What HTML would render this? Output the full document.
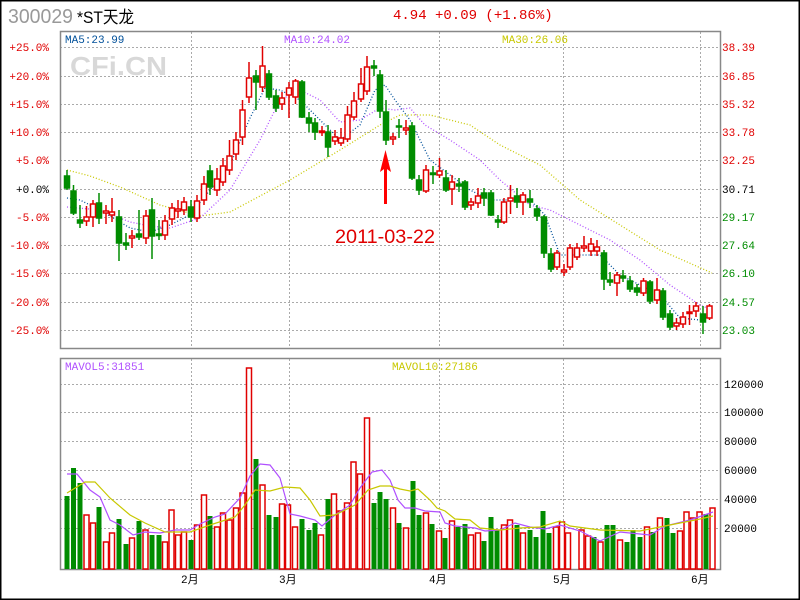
<!DOCTYPE html>
<html><head><meta charset="utf-8"><style>
html,body{margin:0;padding:0;background:#fff;}
svg{display:block;}
text{font-family:"Liberation Mono","Noto Sans CJK SC",monospace;}
</style></head><body>
<svg width="800" height="600" viewBox="0 0 800 600" xmlns="http://www.w3.org/2000/svg">
<rect x="0.5" y="0.5" width="799" height="599" fill="#fff" stroke="#000" stroke-width="2"/>
<text x="8" y="23" font-size="20" fill="#999" style="font-family:'Liberation Sans',sans-serif" textLength="65" lengthAdjust="spacingAndGlyphs">300029</text>
<text x="77" y="23" font-size="17" fill="#000" style="font-family:'Liberation Sans','Noto Sans CJK SC',sans-serif" textLength="57" lengthAdjust="spacingAndGlyphs">*ST天龙</text>
<text x="393" y="19" font-size="14" fill="#e00000">4.94 +0.09 (+1.86%)</text>

<!-- grids -->
<g stroke="#aaa" stroke-dasharray="2 2" stroke-width="1">
<line x1="60" x2="720" y1="47.5" y2="47.5"/><line x1="60" x2="720" y1="76.5" y2="76.5"/><line x1="60" x2="720" y1="104.5" y2="104.5"/><line x1="60" x2="720" y1="132.5" y2="132.5"/><line x1="60" x2="720" y1="160.5" y2="160.5"/><line x1="60" x2="720" y1="189.5" y2="189.5"/><line x1="60" x2="720" y1="217.5" y2="217.5"/><line x1="60" x2="720" y1="245.5" y2="245.5"/><line x1="60" x2="720" y1="273.5" y2="273.5"/><line x1="60" x2="720" y1="302.5" y2="302.5"/><line x1="60" x2="720" y1="330.5" y2="330.5"/>
<line y1="32" y2="348" x1="191.5" x2="191.5"/><line y1="32" y2="348" x1="289.5" x2="289.5"/><line y1="32" y2="348" x1="439.5" x2="439.5"/><line y1="32" y2="348" x1="563.5" x2="563.5"/><line y1="32" y2="348" x1="700.5" x2="700.5"/>
<line x1="60" x2="720" y1="384.5" y2="384.5"/><line x1="60" x2="720" y1="412.5" y2="412.5"/><line x1="60" x2="720" y1="441.5" y2="441.5"/><line x1="60" x2="720" y1="470.5" y2="470.5"/><line x1="60" x2="720" y1="499.5" y2="499.5"/><line x1="60" x2="720" y1="528.5" y2="528.5"/>
<line y1="359" y2="569" x1="191.5" x2="191.5"/><line y1="359" y2="569" x1="289.5" x2="289.5"/><line y1="359" y2="569" x1="439.5" x2="439.5"/><line y1="359" y2="569" x1="563.5" x2="563.5"/><line y1="359" y2="569" x1="700.5" x2="700.5"/>
</g>
<rect x="60.5" y="31.5" width="660" height="317" fill="none" stroke="#888" stroke-width="1.5"/>
<rect x="60.5" y="358.5" width="660" height="211" fill="none" stroke="#888" stroke-width="1.5"/>

<text x="70" y="75" font-size="26" font-weight="bold" fill="#d8d8d8" style="font-family:'Liberation Sans',sans-serif" textLength="97" lengthAdjust="spacingAndGlyphs">CFi.CN</text>

<g font-size="11">
<text x="65" y="43" fill="#00509a">MA5:23.99</text>
<text x="284" y="43" fill="#b050ff">MA10:24.02</text>
<text x="502" y="43" fill="#c8c800">MA30:26.06</text>
<text x="65" y="370" fill="#b050ff">MAVOL5:31851</text>
<text x="392" y="370" fill="#c8c800">MAVOL10:27186</text>
</g>
<g font-size="11" text-anchor="end">
<text x="49" y="51" fill="#e00000">+25.0%</text><text x="49" y="80" fill="#e00000">+20.0%</text><text x="49" y="108" fill="#e00000">+15.0%</text><text x="49" y="136" fill="#e00000">+10.0%</text><text x="49" y="164" fill="#e00000">+5.0%</text><text x="49" y="193" fill="#000">+0.0%</text><text x="49" y="221" fill="#e00000">-5.0%</text><text x="49" y="249" fill="#e00000">-10.0%</text><text x="49" y="277" fill="#e00000">-15.0%</text><text x="49" y="306" fill="#e00000">-20.0%</text><text x="49" y="334" fill="#e00000">-25.0%</text>
</g>
<g font-size="11">
<text x="722" y="51" fill="#e00000">38.39</text><text x="722" y="80" fill="#e00000">36.85</text><text x="722" y="108" fill="#e00000">35.32</text><text x="722" y="136" fill="#e00000">33.78</text><text x="722" y="164" fill="#e00000">32.25</text><text x="722" y="193" fill="#000">30.71</text><text x="722" y="221" fill="#008c00">29.17</text><text x="722" y="249" fill="#008c00">27.64</text><text x="722" y="277" fill="#008c00">26.10</text><text x="722" y="306" fill="#008c00">24.57</text><text x="722" y="334" fill="#008c00">23.03</text>
<text x="724" y="388" fill="#000">120000</text><text x="724" y="416" fill="#000">100000</text><text x="724" y="445" fill="#000">80000</text><text x="724" y="474" fill="#000">60000</text><text x="724" y="503" fill="#000">40000</text><text x="724" y="532" fill="#000">20000</text>
<text x="181" y="583" fill="#000">2月</text><text x="279" y="583" fill="#000">3月</text><text x="429" y="583" fill="#000">4月</text><text x="553" y="583" fill="#000">5月</text><text x="691" y="583" fill="#000">6月</text>
</g>

<!-- MA lines -->
<g fill="none" stroke-dasharray="1 2" stroke-width="1.3">
<polyline stroke="#c8c800" points="67,170 90,176 120,187 160,205 200,216 230,212 260,196 290,180 340,150 380,125 400,115 430,115 470,125 500,145 540,165 580,200 620,225 660,250 712,273"/>
<polyline stroke="#b050ff" points="67,207 100,210 130,222 150,226 170,228 200,218 230,190 260,140 280,100 300,90 320,100 340,122 360,120 380,108 395,110 410,108 425,125 450,140 480,160 500,180 530,205 550,210 580,225 610,240 640,260 670,285 700,305 712,310"/>
<polyline stroke="#00509a" points="67,198 80,200 100,210 130,228 150,232 170,225 190,215 210,190 230,165 250,118 265,88 280,90 300,100 320,120 340,140 360,125 375,90 385,85 395,100 410,120 430,160 450,175 470,190 490,200 510,200 530,200 545,215 560,255 580,255 600,255 620,275 640,285 660,295 680,318 700,320 712,315"/>
</g>

<!-- candles -->
<g stroke-width="1.5">
<g stroke="#008c00" fill="#008c00">
<line x1="67" x2="67" y1="170" y2="190"/><rect x="64.5" y="176" width="5" height="12"/>
<line x1="73.5" x2="73.5" y1="185" y2="215"/><rect x="71" y="191" width="5" height="22"/>
<line x1="80" x2="80" y1="205" y2="228"/><rect x="77.5" y="220" width="5" height="3"/>
<line x1="99" x2="99" y1="193" y2="224"/><rect x="96.5" y="203" width="5" height="15"/>
<line x1="119" x2="119" y1="210" y2="261"/><rect x="116.5" y="217" width="5" height="26"/>
<line x1="126" x2="126" y1="233" y2="250"/><rect x="123.5" y="243" width="5" height="2"/>
<line x1="139" x2="139" y1="210" y2="240"/><rect x="136.5" y="234" width="5" height="3"/>
<line x1="152" x2="152" y1="198" y2="259"/><rect x="149.5" y="210" width="5" height="26"/>
<line x1="159" x2="159" y1="220" y2="240"/><rect x="156.5" y="234" width="5" height="1.5"/>
<line x1="191" x2="191" y1="200" y2="222"/><rect x="188.5" y="207" width="5" height="10"/>
<line x1="210" x2="210" y1="165" y2="195"/><rect x="207.5" y="171" width="5" height="16"/>
<line x1="256" x2="256" y1="70" y2="110"/><rect x="253.5" y="76" width="5" height="6"/>
<line x1="269" x2="269" y1="70" y2="100"/><rect x="266.5" y="74" width="5" height="23"/>
<line x1="276" x2="276" y1="90" y2="112"/><rect x="273.5" y="96" width="5" height="12"/>
<line x1="302" x2="302" y1="80" y2="118"/><rect x="299.5" y="82" width="5" height="35"/>
<line x1="309" x2="309" y1="112" y2="132"/><rect x="306.5" y="118" width="5" height="5"/>
<line x1="315" x2="315" y1="118" y2="140"/><rect x="312.5" y="123" width="5" height="9"/>
<line x1="328" x2="328" y1="125" y2="157"/><rect x="325.5" y="132" width="5" height="15"/>
<line x1="374" x2="374" y1="60" y2="76"/><rect x="371.5" y="66" width="5" height="2"/>
<line x1="380" x2="380" y1="70" y2="118"/><rect x="377.5" y="75" width="5" height="36"/>
<line x1="386" x2="386" y1="100" y2="145"/><rect x="383.5" y="112" width="5" height="28"/>
<line x1="399" x2="399" y1="119" y2="138"/><rect x="396.5" y="126" width="5" height="1"/>
<line x1="412" x2="412" y1="122" y2="180"/><rect x="409.5" y="126" width="5" height="52"/>
<line x1="419" x2="419" y1="175" y2="195"/><rect x="416.5" y="180" width="5" height="10"/>
<line x1="433" x2="433" y1="166" y2="184"/><rect x="430.5" y="173" width="5" height="1.5"/>
<line x1="446" x2="446" y1="170" y2="192"/><rect x="443.5" y="178" width="5" height="12"/>
<line x1="459" x2="459" y1="178" y2="192"/><rect x="456.5" y="184" width="5" height="2"/>
<line x1="465" x2="465" y1="180" y2="210"/><rect x="462.5" y="182" width="5" height="25"/>
<line x1="484" x2="484" y1="188" y2="206"/><rect x="481.5" y="193" width="5" height="5"/>
<line x1="491" x2="491" y1="190" y2="216"/><rect x="488.5" y="193" width="5" height="22"/>
<line x1="498" x2="498" y1="215" y2="228"/><rect x="495.5" y="220" width="5" height="2"/>
<line x1="517" x2="517" y1="188" y2="208"/><rect x="514.5" y="196" width="5" height="6"/>
<line x1="530" x2="530" y1="190" y2="208"/><rect x="527.5" y="199" width="5" height="3"/>
<line x1="537" x2="537" y1="205" y2="221"/><rect x="534.5" y="209" width="5" height="7"/>
<line x1="544" x2="544" y1="215" y2="258"/><rect x="541.5" y="217" width="5" height="36"/>
<line x1="551" x2="551" y1="248" y2="272"/><rect x="548.5" y="254" width="5" height="15"/>
<line x1="604" x2="604" y1="250" y2="290"/><rect x="601.5" y="253" width="5" height="26"/>
<line x1="610" x2="610" y1="272" y2="286"/><rect x="607.5" y="280" width="5" height="2"/>
<line x1="623" x2="623" y1="270" y2="282"/><rect x="620.5" y="276" width="5" height="2"/>
<line x1="630" x2="630" y1="276" y2="292"/><rect x="627.5" y="281" width="5" height="8"/>
<line x1="637" x2="637" y1="284" y2="296"/><rect x="634.5" y="288" width="5" height="4"/>
<line x1="650" x2="650" y1="280" y2="304"/><rect x="647.5" y="282" width="5" height="19"/>
<line x1="663" x2="663" y1="288" y2="320"/><rect x="660.5" y="291" width="5" height="26"/>
<line x1="670" x2="670" y1="310" y2="330"/><rect x="667.5" y="314" width="5" height="13"/>
<line x1="703" x2="703" y1="306" y2="334"/><rect x="700.5" y="314" width="5" height="8"/>
</g>
<g stroke="#e00000" fill="#fff">
<line x1="86.5" x2="86.5" y1="206" y2="226"/><rect x="84" y="217" width="5" height="4"/>
<line x1="93" x2="93" y1="200" y2="227"/><rect x="90.5" y="204" width="5" height="13"/>
<line x1="106" x2="106" y1="205" y2="224"/><rect x="103.5" y="211" width="5" height="2"/>
<line x1="112" x2="112" y1="198" y2="222"/><rect x="109.5" y="212" width="5" height="3"/>
<line x1="132" x2="132" y1="230" y2="248"/><rect x="129.5" y="236" width="5" height="2"/>
<line x1="146" x2="146" y1="210" y2="244"/><rect x="143.5" y="216" width="5" height="22"/>
<line x1="165" x2="165" y1="215" y2="240"/><rect x="162.5" y="221" width="5" height="14"/>
<line x1="172" x2="172" y1="203" y2="225"/><rect x="169.5" y="208" width="5" height="11"/>
<line x1="178" x2="178" y1="200" y2="218"/><rect x="175.5" y="209" width="5" height="2"/>
<line x1="184" x2="184" y1="197" y2="215"/><rect x="181.5" y="202" width="5" height="8"/>
<line x1="197" x2="197" y1="195" y2="222"/><rect x="194.5" y="201" width="5" height="17"/>
<line x1="204" x2="204" y1="176" y2="205"/><rect x="201.5" y="184" width="5" height="16"/>
<line x1="217" x2="217" y1="168" y2="196"/><rect x="214.5" y="179" width="5" height="11"/>
<line x1="223" x2="223" y1="158" y2="186"/><rect x="220.5" y="166" width="5" height="16"/>
<line x1="229.5" x2="229.5" y1="140" y2="175"/><rect x="227" y="156" width="5" height="14"/>
<line x1="236" x2="236" y1="132" y2="160"/><rect x="233.5" y="140" width="5" height="14"/>
<line x1="242.5" x2="242.5" y1="100" y2="145"/><rect x="240" y="110" width="5" height="27"/>
<line x1="249" x2="249" y1="62" y2="103"/><rect x="246.5" y="78" width="5" height="19"/>
<line x1="262.5" x2="262.5" y1="46" y2="92"/><rect x="260" y="66" width="5" height="21"/>
<line x1="282" x2="282" y1="92" y2="110"/><rect x="279.5" y="98" width="5" height="6"/>
<line x1="289" x2="289" y1="82" y2="118"/><rect x="286.5" y="88" width="5" height="7"/>
<line x1="295.5" x2="295.5" y1="79" y2="104"/><rect x="293" y="81" width="5" height="16"/>
<line x1="322" x2="322" y1="126" y2="136"/><rect x="319.5" y="131" width="5" height="1.5"/>
<line x1="335" x2="335" y1="130" y2="145"/><rect x="332.5" y="137" width="5" height="4"/>
<line x1="341" x2="341" y1="128" y2="146"/><rect x="338.5" y="138" width="5" height="5"/>
<line x1="347.5" x2="347.5" y1="106" y2="142"/><rect x="345" y="115" width="5" height="24"/>
<line x1="354" x2="354" y1="92" y2="120"/><rect x="351.5" y="101" width="5" height="16"/>
<line x1="361" x2="361" y1="68" y2="102"/><rect x="358.5" y="84" width="5" height="15"/>
<line x1="367" x2="367" y1="56" y2="95"/><rect x="364.5" y="67" width="5" height="24"/>
<line x1="393" x2="393" y1="133" y2="145"/><rect x="390.5" y="137" width="5" height="2"/>
<line x1="406" x2="406" y1="120" y2="135"/><rect x="403.5" y="128" width="5" height="2"/>
<line x1="426" x2="426" y1="165" y2="193"/><rect x="423.5" y="170" width="5" height="21"/>
<line x1="439.5" x2="439.5" y1="158" y2="178"/><rect x="437" y="171" width="5" height="4"/>
<line x1="452" x2="452" y1="175" y2="205"/><rect x="449.5" y="182" width="5" height="7"/>
<line x1="471" x2="471" y1="198" y2="210"/><rect x="468.5" y="202" width="5" height="3"/>
<line x1="478" x2="478" y1="188" y2="208"/><rect x="475.5" y="196" width="5" height="7"/>
<line x1="504" x2="504" y1="198" y2="224"/><rect x="501.5" y="202" width="5" height="20"/>
<line x1="510.5" x2="510.5" y1="185" y2="214"/><rect x="508" y="198" width="5" height="3"/>
<line x1="523" x2="523" y1="192" y2="215"/><rect x="520.5" y="195" width="5" height="7"/>
<line x1="557" x2="557" y1="250" y2="270"/><rect x="554.5" y="253" width="5" height="14"/>
<line x1="564" x2="564" y1="264" y2="276"/><rect x="561.5" y="270" width="5" height="2"/>
<line x1="570" x2="570" y1="244" y2="270"/><rect x="567.5" y="248" width="5" height="19"/>
<line x1="577" x2="577" y1="243" y2="260"/><rect x="574.5" y="248" width="5" height="9"/>
<line x1="584" x2="584" y1="236" y2="252"/><rect x="581.5" y="246" width="5" height="2"/>
<line x1="591" x2="591" y1="238" y2="256"/><rect x="588.5" y="244" width="5" height="7"/>
<line x1="597" x2="597" y1="240" y2="256"/><rect x="594.5" y="247" width="5" height="4"/>
<line x1="617" x2="617" y1="272" y2="296"/><rect x="614.5" y="275" width="5" height="8"/>
<line x1="643.5" x2="643.5" y1="278" y2="296"/><rect x="641" y="281" width="5" height="12"/>
<line x1="657" x2="657" y1="278" y2="304"/><rect x="654.5" y="290" width="5" height="10"/>
<line x1="676.5" x2="676.5" y1="318" y2="330"/><rect x="674" y="323" width="5" height="3"/>
<line x1="683" x2="683" y1="312" y2="328"/><rect x="680.5" y="317" width="5" height="7"/>
<line x1="689.5" x2="689.5" y1="305" y2="325"/><rect x="687" y="312" width="5" height="1.5"/>
<line x1="696" x2="696" y1="302" y2="317"/><rect x="693.5" y="306" width="5" height="5"/>
<line x1="709.5" x2="709.5" y1="304" y2="320"/><rect x="707" y="306" width="5" height="12"/>
</g>
</g>

<!-- arrow and date -->
<g fill="#ff0000">
<rect x="384" y="162" width="3" height="42"/>
<polygon points="385.5,150 380,172 385.5,168 391,172"/>
</g>
<text x="335" y="243" font-size="19" fill="#e00000" style="font-family:'Liberation Sans',sans-serif" textLength="100" lengthAdjust="spacingAndGlyphs">2011-03-22</text>

<!-- volume bars -->
<g stroke-width="1.5">
<g fill="#008c00">
<rect x="64.5" y="496" width="5" height="73"/><rect x="71" y="468" width="5" height="101"/><rect x="77.5" y="483" width="5" height="86"/>
<rect x="96.5" y="507" width="5" height="62"/><rect x="116.5" y="519" width="5" height="50"/><rect x="123.5" y="544" width="5" height="25"/>
<rect x="136.5" y="521" width="5" height="48"/><rect x="149.5" y="535" width="5" height="34"/><rect x="156.5" y="535" width="5" height="34"/>
<rect x="188.5" y="540" width="5" height="29"/><rect x="207.5" y="516" width="5" height="53"/><rect x="253.5" y="459" width="5" height="110"/>
<rect x="266.5" y="515" width="5" height="54"/><rect x="273.5" y="517" width="5" height="52"/><rect x="299.5" y="519" width="5" height="50"/>
<rect x="306.5" y="530" width="5" height="39"/><rect x="312.5" y="523" width="5" height="46"/><rect x="325.5" y="499" width="5" height="70"/>
<rect x="371.5" y="503" width="5" height="66"/><rect x="377.5" y="492" width="5" height="77"/><rect x="383.5" y="499" width="5" height="70"/>
<rect x="396.5" y="523" width="5" height="46"/><rect x="410.5" y="481" width="5" height="88"/><rect x="416.5" y="515" width="5" height="54"/>
<rect x="429.5" y="524" width="5" height="45"/><rect x="442.5" y="538" width="5" height="31"/><rect x="455.5" y="527" width="5" height="42"/>
<rect x="462.5" y="524" width="5" height="45"/><rect x="481.5" y="541" width="5" height="28"/><rect x="488.5" y="517" width="5" height="52"/>
<rect x="494.5" y="530" width="5" height="39"/><rect x="514.5" y="525" width="5" height="44"/><rect x="527.5" y="530" width="5" height="39"/>
<rect x="533.5" y="537" width="5" height="32"/><rect x="540.5" y="511" width="5" height="58"/><rect x="546.5" y="533" width="5" height="36"/>
<rect x="591.5" y="537" width="5" height="32"/><rect x="604.5" y="525" width="5" height="44"/><rect x="610.5" y="525" width="5" height="44"/>
<rect x="624.5" y="542" width="5" height="27"/><rect x="630.5" y="530" width="5" height="39"/><rect x="637.5" y="537" width="5" height="32"/>
<rect x="650.5" y="532" width="5" height="37"/><rect x="664.5" y="518" width="5" height="51"/><rect x="670.5" y="533" width="5" height="36"/>
<rect x="703.5" y="514" width="5" height="55"/>
</g>
<g fill="#fff" stroke="#e00000">
<rect x="84" y="515" width="5" height="54"/><rect x="90.5" y="523" width="5" height="46"/><rect x="103.5" y="542" width="5" height="27"/>
<rect x="109.5" y="533" width="5" height="36"/><rect x="129.5" y="538" width="5" height="31"/><rect x="143" y="530" width="5" height="39"/>
<rect x="162.5" y="542" width="5" height="27"/><rect x="169" y="510" width="5" height="59"/><rect x="175.5" y="535" width="5" height="34"/>
<rect x="181.5" y="532" width="5" height="37"/><rect x="194.5" y="525" width="5" height="44"/><rect x="201.5" y="495" width="5" height="74"/>
<rect x="214.5" y="527" width="5" height="42"/><rect x="220.5" y="513" width="5" height="56"/><rect x="227" y="520" width="5" height="49"/>
<rect x="233.5" y="508" width="5" height="61"/><rect x="240" y="493" width="5" height="76"/><rect x="246.5" y="368" width="5" height="201"/>
<rect x="260" y="485" width="5" height="84"/><rect x="279.5" y="504" width="5" height="65"/><rect x="285.5" y="505" width="5" height="64"/>
<rect x="292.5" y="527" width="5" height="42"/><rect x="318.5" y="535" width="5" height="34"/><rect x="331.5" y="494" width="5" height="75"/>
<rect x="338" y="511" width="5" height="58"/><rect x="344.5" y="503" width="5" height="66"/><rect x="351" y="462" width="5" height="107"/>
<rect x="357.5" y="474" width="5" height="95"/><rect x="364.5" y="418" width="5" height="151"/><rect x="390.5" y="508" width="5" height="61"/>
<rect x="403.5" y="528" width="5" height="41"/><rect x="423.5" y="513" width="5" height="56"/><rect x="436.5" y="531" width="5" height="38"/>
<rect x="449.5" y="521" width="5" height="48"/><rect x="468.5" y="535" width="5" height="34"/><rect x="475.5" y="533" width="5" height="36"/>
<rect x="501.5" y="525" width="5" height="44"/><rect x="507.5" y="520" width="5" height="49"/><rect x="520.5" y="533" width="5" height="36"/>
<rect x="553.5" y="527" width="5" height="42"/><rect x="559.5" y="522" width="5" height="47"/><rect x="565.5" y="533" width="5" height="36"/>
<rect x="579" y="530" width="5" height="39"/><rect x="585.5" y="536" width="5" height="33"/><rect x="598" y="542" width="5" height="27"/>
<rect x="617.5" y="540" width="5" height="29"/><rect x="644.5" y="527" width="5" height="42"/><rect x="657.5" y="518" width="5" height="51"/>
<rect x="677.5" y="531" width="5" height="38"/><rect x="684" y="512" width="5" height="57"/><rect x="690.5" y="518" width="5" height="51"/>
<rect x="697" y="512" width="5" height="57"/><rect x="710" y="508" width="5" height="61"/>
</g>
</g>
<g fill="none" stroke-width="1.2">
<polyline stroke="#b050ff" points="67,474 77,474 90,490 100,497 110,520 120,525 133,535 145,532 160,533 175,530 190,530 200,524 215,517 225,514 240,498 250,476 260,464 270,465 280,478 290,514 300,516 315,520 322,526 335,515 350,505 360,488 372,472 382,470 390,480 398,500 405,508 415,508 425,511 440,512 445,523 455,526 475,528 485,531 500,530 515,523 530,527 545,529 560,525 580,531 600,541 620,532 650,535 665,526 690,520 713,512"/>
<polyline stroke="#c8c800" points="67,493 85,482 95,482 110,498 130,515 145,523 165,532 190,532 210,525 235,517 245,505 255,490 270,491 285,487 300,488 310,500 320,516 335,515 355,505 368,490 380,486 390,486 400,489 410,491 418,489 430,500 437,508 445,511 455,519 470,520 480,528 500,530 520,528 540,527 560,521 570,526 600,530 640,531 660,527 680,523 700,519 713,516"/>
</g>
</svg>
</body></html>
